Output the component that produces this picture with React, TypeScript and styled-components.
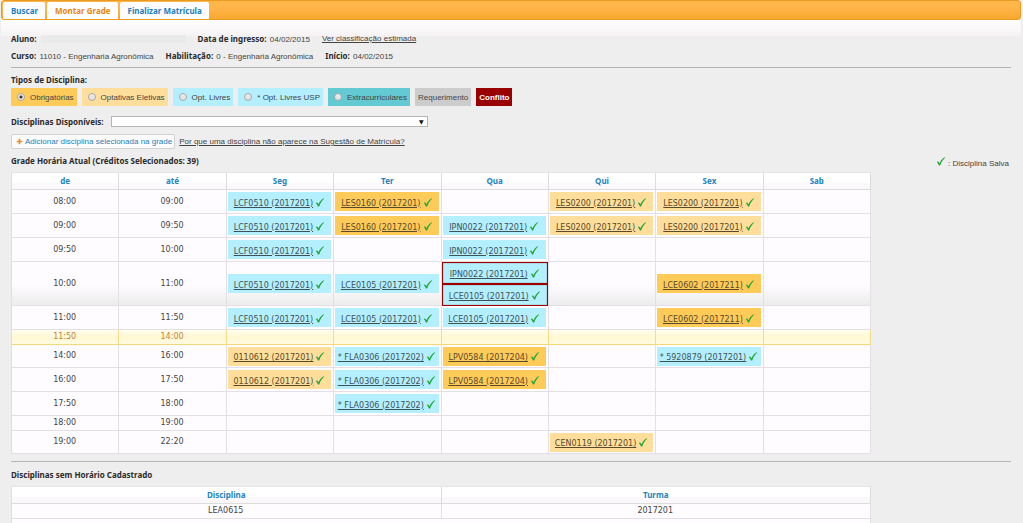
import React from "react";
import styled, { createGlobalStyle, css } from "styled-components";

type Kind = "required" | "elective" | "free" | "extra" | "request" | "conflict";

const kindColors: Record<Kind, string> = {
  required: "#ffcb58",
  elective: "#fede9a",
  free: "#b3efff",
  extra: "#63c9d2",
  request: "#cccccc",
  conflict: "#990000",
};

const bodyFont = `"Liberation Sans", Arial, sans-serif`;
const boldFont = `"Noto Sans", "Open Sans", sans-serif`;
const tableFont = `"DejaVu Sans", Verdana, sans-serif`;

const GlobalStyle = createGlobalStyle`
  * { box-sizing: border-box; }
  body {
    margin: 0;
    background: #eeeeee;
    color: #444444;
    font: 8px/17px ${bodyFont};
    overflow-x: hidden;
  }
`;

const Page = styled.div`
  margin: 0 2px 0 1px;
  min-height: 100vh;
  background: linear-gradient(#ffffff 20px, #f6f3f4 35px, #eeeeee 37px) no-repeat #eeeeee;
`;

const TabBar = styled.nav`
  display: flex;
  align-items: flex-end;
  gap: 2px;
  height: 20px;
  padding: 0 1px;
  border: 1px solid #e99a20;
  border-radius: 3px;
  background: linear-gradient(#ffb74b, #ffb347 50%, #f6a82d);
`;

const Tab = styled.button<{ $active?: boolean }>`
  height: 17px;
  padding: 0 7px 0 8px;
  border: 0;
  border-radius: 2px 2px 0 0;
  background: ${(p) => (p.$active ? "#ffffff" : "#fdfcfd")};
  color: ${(p) => (p.$active ? "#ea8511" : "#1c7fc0")};
  font: bold 8px/16px ${boldFont};
`;

const Content = styled.main`
  padding: 10px 10px 0;
`;

const InfoLine = styled.div`
  display: flex;
  align-items: center;
  gap: 12px;
  height: 17px;
  white-space: nowrap;
`;

const Strong = styled.strong`
  margin-right: 1px;
  color: #2b2b2b;
  font-family: ${boldFont};
`;

const HiddenName = styled.span`
  display: inline-block;
  width: 145px;
  height: 8px;
  margin-left: 3px;
  vertical-align: middle;
  background: #e9ebea;
`;

const TextLink = styled.a`
  color: #444444;
  text-decoration: underline;
`;

const Rule = styled.hr`
  height: 1px;
  margin: 3px 0;
  border: 0;
  background: #b4b4b4;
`;

const LowerRule = styled(Rule)`
  margin: 7px 0 4px;
`;

const Heading = styled.h2`
  margin: 0;
  color: #2b2b2b;
  font: bold 8px/17px ${boldFont};
`;

const Badges = styled.div`
  display: flex;
  gap: 5px;
`;

const badge = css<{ $kind: Kind }>`
  display: flex;
  align-items: center;
  height: 18px;
  padding: 0 3px;
  background: ${(p) => kindColors[p.$kind]};
  white-space: nowrap;
`;

const RadioBadge = styled.label<{ $kind: Kind }>`
  ${badge}
  gap: 5px;
  padding-left: 6px;
`;

const PlainBadge = styled.span<{ $kind: Kind }>`
  ${badge}
  ${(p) => p.$kind === "conflict" && `color: #ffffff; font-weight: bold;`}
`;

const Radio = styled.input`
  appearance: none;
  width: 8px;
  height: 8px;
  margin: 0;
  border: 1px solid #a9a9a9;
  border-radius: 50%;
  background: linear-gradient(#eeeeee, #dddddd);
  &:checked {
    background: radial-gradient(circle, #3c3c3c 1px, #e8e8e8 2px);
  }
`;

const PickerRow = styled.div`
  display: flex;
  align-items: center;
  gap: 7px;
  height: 11px;
  margin-top: 10px;
`;

const PickerLabel = styled.label`
  color: #2b2b2b;
  font: bold 8px/11px ${boldFont};
  white-space: nowrap;
`;

const SelectBox = styled.div`
  display: grid;
  align-items: center;
  width: 317px;
  &::after {
    content: "▼";
    grid-area: 1 / 1;
    justify-self: end;
    padding-right: 4px;
    color: #111111;
    font: 6px/11px "DejaVu Sans", sans-serif;
    pointer-events: none;
  }
`;

const Select = styled.select`
  grid-area: 1 / 1;
  appearance: none;
  height: 11px;
  width: 100%;
  padding: 0 12px 0 3px;
  border: 1px solid #b5b5b5;
  border-radius: 0;
  background: #ffffff;
  font: 8px/9px ${bodyFont};
`;

const ActionRow = styled.div`
  display: flex;
  align-items: center;
  gap: 4px;
  height: 15px;
  margin: 7px 0 3px;
`;

const AddButton = styled.button`
  display: flex;
  align-items: center;
  gap: 2px;
  height: 15px;
  padding: 0 2px 0 4px;
  border: 1px solid #d2d2d2;
  border-radius: 2px;
  background: #fbfbfb;
  color: #2a7fb8;
  font: 8px/13px ${bodyFont};
  white-space: nowrap;
`;

const TitleRow = styled.div`
  display: flex;
  justify-content: space-between;
  margin-bottom: 3px;
`;

const SavedNote = styled.span`
  display: flex;
  align-items: center;
  gap: 2px;
  height: 17px;
  padding: 5px 2px 0 0;
`;

const Table = styled.table`
  width: 86%;
  table-layout: fixed;
  border-collapse: separate;
  border-spacing: 0;
  border-left: 1px solid #e0dfe0;
  border-top: 1px solid #e6e5e6;
  background: #fffcff;
  font: 8px/12px ${tableFont};
  text-align: center;
`;

const HeadCell = styled.th`
  height: 17px;
  padding: 0;
  border-right: 1px solid #dddcdd;
  border-bottom: 1px solid #dddcdd;
  background: linear-gradient(#ffffff 60%, #faf8fa 61%);
  color: #2283be;
  font: bold 8px/12px ${boldFont};
`;

type RowTone = "normal" | "tall" | "break";

const Row = styled.tr<{ $height: number; $tone?: RowTone }>`
  height: ${(p) => p.$height}px;
  ${(p) => p.$tone === "tall" && `background: linear-gradient(#fffcff 50%, #ececec);`}
  ${(p) => p.$tone === "break" && `background: linear-gradient(#fffdee, #fff8d2 50%, #fffbe4); color: #c4803c;`}
`;

const Cell = styled.td<{ $break?: boolean }>`
  padding: 0 2px 0 1px;
  border-right: 1px solid ${(p) => (p.$break ? "#f5dc85" : "#e4dfe4")};
  border-bottom: 1px solid ${(p) => (p.$break ? "#f3d878" : "#e4dfe4")};
`;

const ConflictCell = styled(Cell)`
  padding: 0;
`;

const Course = styled.div<{ $kind: Kind; $conflict?: boolean }>`
  display: flex;
  align-items: center;
  justify-content: center;
  gap: 2px;
  height: 19px;
  padding-top: 4px;
  background: ${(p) => kindColors[p.$kind]};
  color: ${(p) => (p.$kind === "free" ? "#3f5258" : "#5a4a2c")};
  white-space: nowrap;
  ${(p) =>
    p.$conflict &&
    `height: 22px; border: 1px solid #990000; box-shadow: inset 0 0 1px #990000;
     &:last-child { margin-bottom: -1px; }`}
`;

const CourseLink = styled.a`
  color: inherit;
  text-decoration: underline;
`;

const CheckMark = styled.svg`
  flex: none;
  margin-bottom: 3px;
`;

const MiniButton = styled.button<{ $wide?: boolean }>`
  width: ${(p) => (p.$wide ? 20 : 14)}px;
  height: 12px;
  margin: 2px 0 0;
  padding: 0;
  border: 1px solid #dddddd;
  background: #eeeeee;
`;

const MiniButtons = styled.div`
  display: flex;
  justify-content: center;
  gap: 63px;
  padding-left: 70px;
`;

const Check = () => (
  <CheckMark width="10" height="9" viewBox="0 0 10 9" aria-hidden="true">
    <path d="M0.8 5.1 C1.4 4.4 2.2 4.3 2.6 4.9 L3.5 6.2 C4.7 3.7 6.3 1.6 8.8 0.3 L9.2 0.6 C7 2.7 5.4 5.3 4.2 8.4 L2.9 8.5 C2.3 7.1 1.7 6 0.8 5.1 Z" fill="#25a83a" />
  </CheckMark>
);

const Plus = () => (
  <svg width="7" height="7" viewBox="0 0 7 7" aria-hidden="true">
    <path d="M3.5 0.7 V6.3 M0.7 3.5 H6.3" stroke="#ee8a1d" strokeWidth="1.6" />
  </svg>
);

type Slot = [string, Kind];
const slot = (code: string, kind: Kind): Slot[] => [[code, kind]];
const none: Slot[] = [];

const lcf = slot("LCF0510 (2017201)", "free");
const les160 = slot("LES0160 (2017201)", "required");
const les200 = slot("LES0200 (2017201)", "elective");
const ipn = slot("IPN0022 (2017201)", "free");
const lce105 = slot("LCE0105 (2017201)", "free");
const lce602 = slot("LCE0602 (2017211)", "required");
const zero = slot("0110612 (2017201)", "elective");
const fla = slot("* FLA0306 (2017202)", "free");
const lpv = slot("LPV0584 (2017204)", "required");

interface Hour {
  from: string;
  to: string;
  height: number;
  tone?: RowTone;
  days: Slot[][];
}

const hours: Hour[] = [
  { from: "08:00", to: "09:00", height: 24, days: [lcf, les160, none, les200, les200, none] },
  { from: "09:00", to: "09:50", height: 24, days: [lcf, les160, ipn, les200, les200, none] },
  { from: "09:50", to: "10:00", height: 24, days: [lcf, none, ipn, none, none, none] },
  { from: "10:00", to: "11:00", height: 44, tone: "tall", days: [lcf, lce105, [...ipn, ...lce105], none, lce602, none] },
  { from: "11:00", to: "11:50", height: 24, days: [lcf, lce105, lce105, none, lce602, none] },
  { from: "11:50", to: "14:00", height: 15, tone: "break", days: [none, none, none, none, none, none] },
  { from: "14:00", to: "16:00", height: 23, days: [zero, fla, lpv, none, slot("* 5920879 (2017201)", "free"), none] },
  { from: "16:00", to: "17:50", height: 24, days: [zero, fla, lpv, none, none, none] },
  { from: "17:50", to: "18:00", height: 24, days: [none, fla, none, none, none, none] },
  { from: "18:00", to: "19:00", height: 15, days: [none, none, none, none, none, none] },
  { from: "19:00", to: "22:20", height: 23, days: [none, none, none, slot("CEN0119 (2017201)", "elective"), none, none] },
];

const options: [string, Kind][] = [
  ["Obrigatórias", "required"],
  ["Optativas Eletivas", "elective"],
  ["Opt. Livres", "free"],
  ["* Opt. Livres USP", "free"],
  ["Extracurriculares", "extra"],
];

const DayCell = ({ slots, isBreak }: { slots: Slot[]; isBreak: boolean }) => {
  const conflict = slots.length > 1;
  const Wrapper = conflict ? ConflictCell : Cell;
  return (
    <Wrapper $break={isBreak}>
      {slots.map(([code, kind]) => (
        <Course key={code} $kind={kind} $conflict={conflict}>
          <CourseLink href="#">{code}</CourseLink>
          <Check />
        </Course>
      ))}
    </Wrapper>
  );
};

export default function App() {
  return (
    <>
      <GlobalStyle />
      <Page>
        <TabBar>
          <Tab>Buscar</Tab>
          <Tab $active>Montar Grade</Tab>
          <Tab>Finalizar Matrícula</Tab>
        </TabBar>
        <Content>
          <InfoLine>
            <span>
              <Strong>Aluno:</Strong>
              <HiddenName />
            </span>
            <span><Strong>Data de ingresso:</Strong> 04/02/2015</span>
            <TextLink href="#">Ver classificação estimada</TextLink>
          </InfoLine>
          <InfoLine>
            <span><Strong>Curso:</Strong> 11010 - Engenharia Agronômica</span>
            <span><Strong>Habilitação:</Strong> 0 - Engenharia Agronômica</span>
            <span><Strong>Início:</Strong> 04/02/2015</span>
          </InfoLine>
          <Rule />
          <Heading>Tipos de Disciplina:</Heading>
          <Badges>
            {options.map(([label, kind], i) => (
              <RadioBadge key={label} $kind={kind}>
                <Radio type="radio" name="tipo" defaultChecked={i === 0} />
                {label}
              </RadioBadge>
            ))}
            <PlainBadge $kind="request">Requerimento</PlainBadge>
            <PlainBadge $kind="conflict">Conflito</PlainBadge>
          </Badges>
          <PickerRow>
            <PickerLabel htmlFor="disciplinas">Disciplinas Disponíveis:</PickerLabel>
            <SelectBox>
              <Select id="disciplinas" />
            </SelectBox>
          </PickerRow>
          <ActionRow>
            <AddButton><Plus />Adicionar disciplina selecionada na grade</AddButton>
            <TextLink href="#">Por que uma disciplina não aparece na Sugestão de Matrícula?</TextLink>
          </ActionRow>
          <TitleRow>
            <Heading>Grade Horária Atual (Créditos Selecionados: 39)</Heading>
            <SavedNote><Check />: Disciplina Salva</SavedNote>
          </TitleRow>
          <Table>
            <thead>
              <tr>
                {["de", "até", "Seg", "Ter", "Qua", "Qui", "Sex", "Sab"].map((day) => (
                  <HeadCell key={day}>{day}</HeadCell>
                ))}
              </tr>
            </thead>
            <tbody>
              {hours.map((hour) => {
                const isBreak = hour.tone === "break";
                return (
                  <Row key={hour.from} $height={hour.height} $tone={hour.tone}>
                    <Cell $break={isBreak}>{hour.from}</Cell>
                    <Cell $break={isBreak}>{hour.to}</Cell>
                    {hour.days.map((slots, i) => (
                      <DayCell key={i} slots={slots} isBreak={isBreak} />
                    ))}
                  </Row>
                );
              })}
            </tbody>
          </Table>
          <LowerRule />
          <TitleRow>
            <Heading>Disciplinas sem Horário Cadastrado</Heading>
          </TitleRow>
          <Table>
            <thead>
              <tr>
                <HeadCell>Disciplina</HeadCell>
                <HeadCell>Turma</HeadCell>
              </tr>
            </thead>
            <tbody>
              <Row $height={15}>
                <Cell>LEA0615</Cell>
                <Cell>2017201</Cell>
              </Row>
              <Row $height={18}>
                <Cell colSpan={2}>
                  <MiniButtons>
                    <MiniButton aria-label="Anterior" />
                    <MiniButton $wide aria-label="Próxima" />
                  </MiniButtons>
                </Cell>
              </Row>
            </tbody>
          </Table>
        </Content>
      </Page>
    </>
  );
}
